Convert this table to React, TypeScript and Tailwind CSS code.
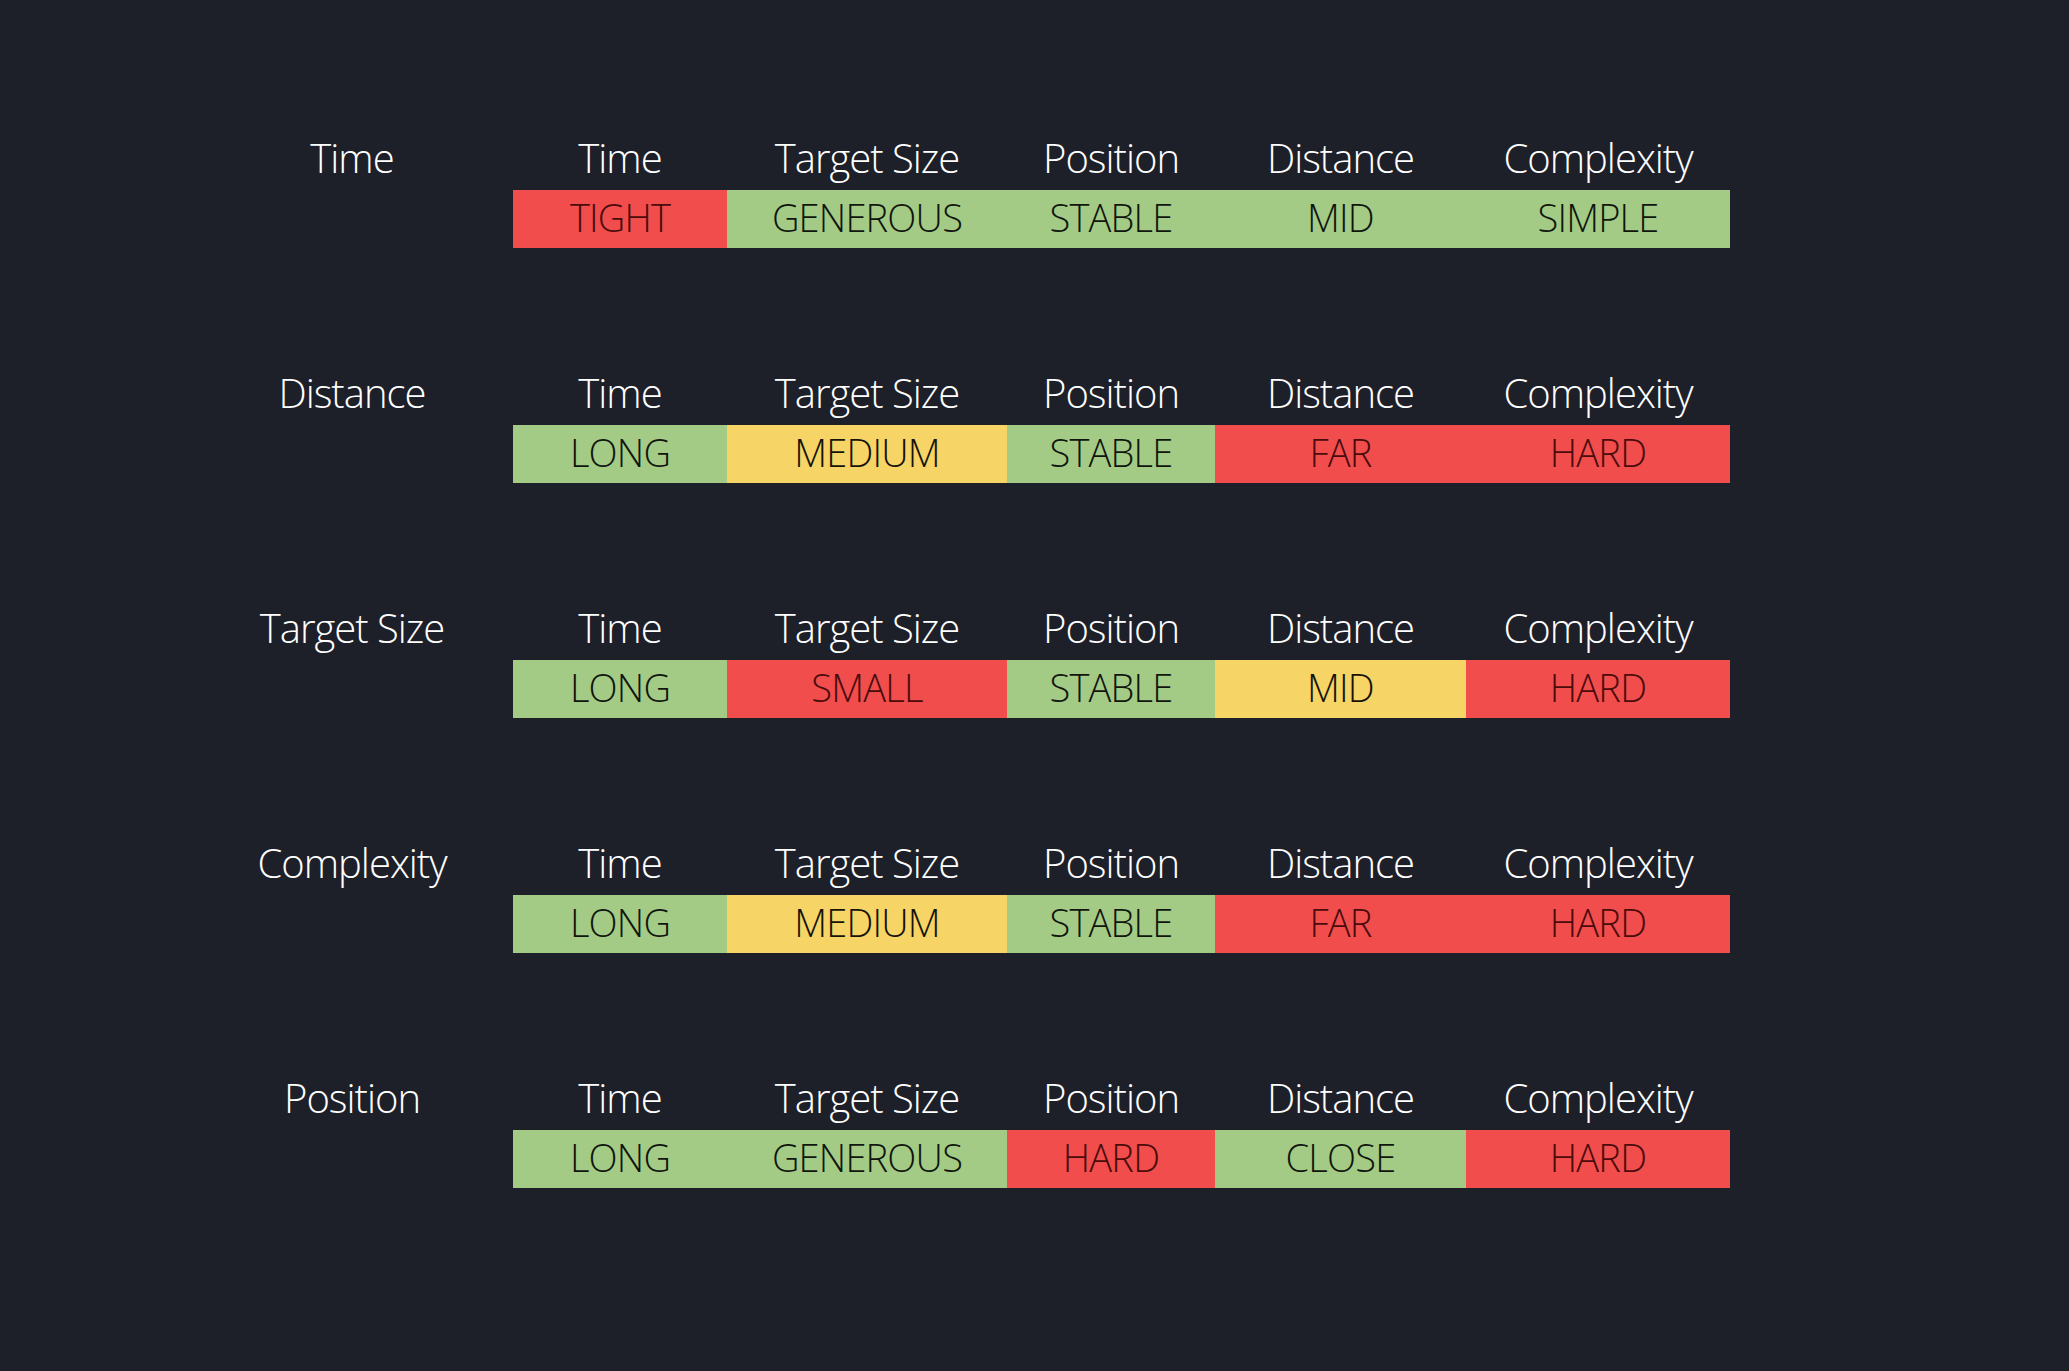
import React from "react";

type Cell = { t: string; c: "r" | "g" | "y" };

const cols = ["Time", "Target Size", "Position", "Distance", "Complexity"];
const widths = ["w-[214px]", "w-[280px]", "w-[208px]", "w-[251px]", "w-[264px]"];

const rows: { label: string; cells: Cell[] }[] = [
  { label: "Time", cells: [{ t: "TIGHT", c: "r" }, { t: "GENEROUS", c: "g" }, { t: "STABLE", c: "g" }, { t: "MID", c: "g" }, { t: "SIMPLE", c: "g" }] },
  { label: "Distance", cells: [{ t: "LONG", c: "g" }, { t: "MEDIUM", c: "y" }, { t: "STABLE", c: "g" }, { t: "FAR", c: "r" }, { t: "HARD", c: "r" }] },
  { label: "Target Size", cells: [{ t: "LONG", c: "g" }, { t: "SMALL", c: "r" }, { t: "STABLE", c: "g" }, { t: "MID", c: "y" }, { t: "HARD", c: "r" }] },
  { label: "Complexity", cells: [{ t: "LONG", c: "g" }, { t: "MEDIUM", c: "y" }, { t: "STABLE", c: "g" }, { t: "FAR", c: "r" }, { t: "HARD", c: "r" }] },
  { label: "Position", cells: [{ t: "LONG", c: "g" }, { t: "GENEROUS", c: "g" }, { t: "HARD", c: "r" }, { t: "CLOSE", c: "g" }, { t: "HARD", c: "r" }] },
];

const bg: Record<Cell["c"], string> = {
  r: "bg-[#f14d4d] text-[#4a0b0b]",
  g: "bg-[#a3cb86] text-[#10150d]",
  y: "bg-[#f6d466] text-[#15120a]",
};

export default function App() {
  return (
    <div
      className="w-[2069px] h-[1371px] bg-[#1e2029] pt-[136px] pl-[191px] flex flex-col gap-[123px] overflow-hidden"
      style={{ fontFamily: '"Open Sans", "Noto Sans", sans-serif' }}
    >
      {rows.map((r) => (
        <div key={r.label} className="flex">
          <div className="w-[322px] h-[48px] pb-[4px] flex items-center justify-center text-white text-[40px] leading-none font-light tracking-[-1px] whitespace-nowrap">
            {r.label}
          </div>
          <div className="flex flex-col gap-[6px]">
            <div className="flex h-[48px]">
              {cols.map((c, i) => (
                <div key={c} className={`${widths[i]} pb-[4px] flex items-center justify-center text-white text-[40px] leading-none font-light tracking-[-1px] whitespace-nowrap`}>
                  {c}
                </div>
              ))}
            </div>
            <div className="flex h-[58px]">
              {r.cells.map((cell, i) => (
                <div key={i} className={`${widths[i]} ${bg[cell.c]} pb-[5px] flex items-center justify-center text-[38px] leading-none font-light tracking-[-0.8px] whitespace-nowrap`}>
                  {cell.t}
                </div>
              ))}
            </div>
          </div>
        </div>
      ))}
    </div>
  );
}
